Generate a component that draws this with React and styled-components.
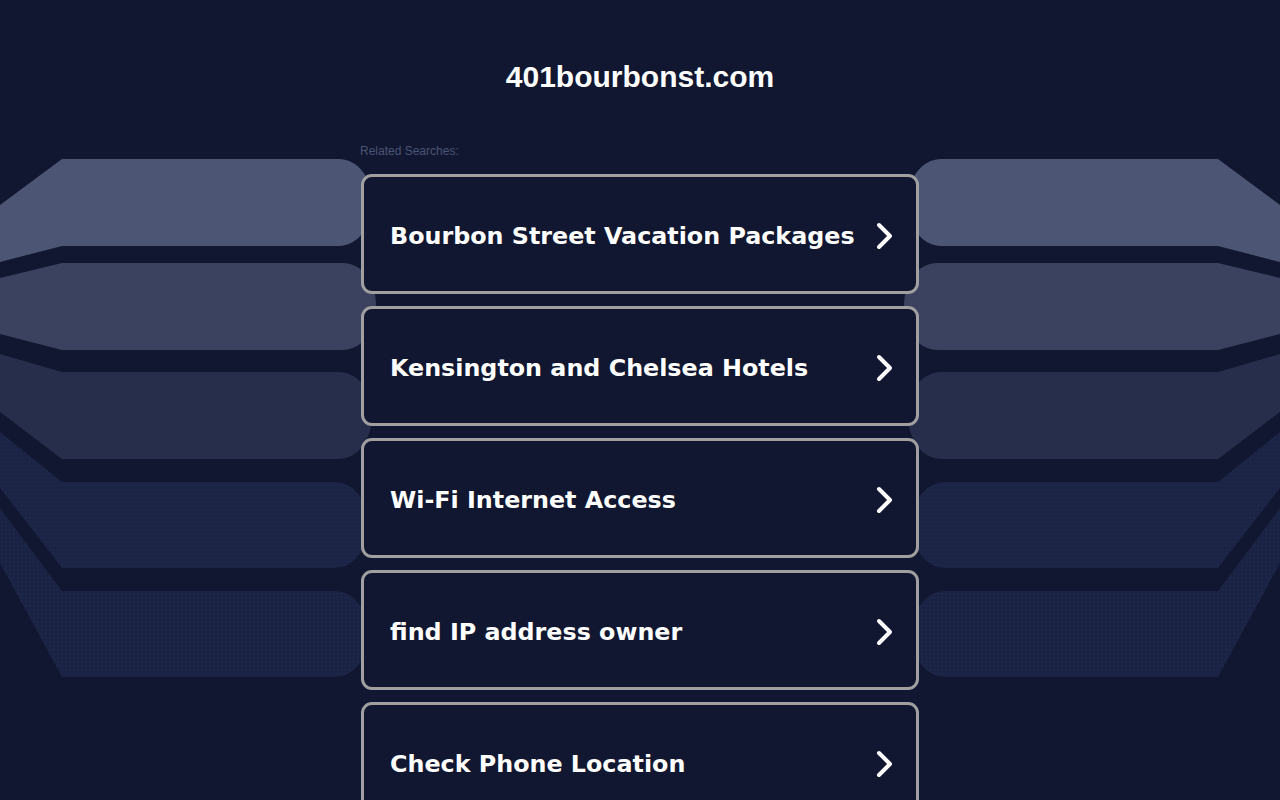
import styled, { createGlobalStyle } from "styled-components";

const GlobalStyle = createGlobalStyle`
  html, body {
    margin: 0;
    padding: 0;
    background: #111730;
  }
  body {
    font-family: "Liberation Sans", Arial, sans-serif;
    overflow: hidden;
  }
`;

const Page = styled.div`
  position: relative;
  min-height: 800px;
  overflow: hidden;
`;

const Backdrop = styled.svg`
  position: absolute;
  top: 0;
  left: 50%;
  margin-left: -640px;
  width: 1280px;
  height: 800px;
  z-index: 0;
`;

const Content = styled.main`
  position: relative;
  z-index: 1;
  width: 558px;
  margin: 0 auto;
  display: flex;
  flex-direction: column;
`;

const Title = styled.h1`
  margin: 0;
  padding-top: 57px;
  height: 40px;
  line-height: 40px;
  text-align: center;
  color: #ffffff;
  font-family: "Liberation Sans", Arial, sans-serif;
  font-weight: bold;
  font-size: 30px;
`;

const Related = styled.div`
  margin-top: 47px;
  margin-left: -1px;
  font-size: 12px;
  line-height: 14px;
  color: #4b5474;
`;

const List = styled.div`
  margin-top: 16px;
  display: flex;
  flex-direction: column;
  gap: 12px;
`;

const Card = styled.a`
  box-sizing: border-box;
  height: 120px;
  display: flex;
  align-items: center;
  justify-content: space-between;
  padding: 4px 22px 0 26px;
  border: 3px solid #a0a0a0;
  border-radius: 11px;
  background: #111730;
  color: #ffffff;
  text-decoration: none;
  font-family: "DejaVu Sans", Verdana, sans-serif;
  font-weight: bold;
  font-size: 23.8px;
  cursor: pointer;
`;

const Label = styled.span`
  white-space: nowrap;
`;

const Chevron = () => (
  <svg width="20" height="28" viewBox="0 0 20 28">
    <polyline
      points="5,3 16,14 5,25"
      fill="none"
      stroke="#ffffff"
      strokeWidth="4"
      strokeLinecap="round"
      strokeLinejoin="round"
    />
  </svg>
);

const bands = [
  { d: "M0,205 L62,159 L338,159 C360,159 372,180 372,202 C372,224 360,246 338,246 L62,246 L0,262 Z", fill: "#4c5573" },
  { d: "M0,278 L62,263 L342,263 C364,263 376,284 376,306 C376,328 364,350 342,350 L62,350 L0,334 Z", fill: "#3a4260" },
  { d: "M0,354 L62,372 L338,372 C360,372 372,393 372,415 C372,437 360,459 338,459 L62,459 L0,412 Z", fill: "#262e4c" },
  { d: "M0,432 L62,482 L334,482 C356,482 368,503 368,525 C368,547 356,568 334,568 L62,568 L0,488 Z", fill: "#1c2445", dots: true },
  { d: "M0,508 L62,591 L334,591 C356,591 368,612 368,634 C368,656 356,677 334,677 L62,677 L0,563 Z", fill: "#1b2344", dots: true },
];

const BandSet = () => (
  <>
    {bands.map((b, i) => (
      <g key={i}>
        <path d={b.d} fill={b.fill} />
        {b.dots && <path d={b.d} fill="url(#dots)" />}
      </g>
    ))}
  </>
);

const searches = [
  "Bourbon Street Vacation Packages",
  "Kensington and Chelsea Hotels",
  "Wi-Fi Internet Access",
  "find IP address owner",
  "Check Phone Location",
];

export default function App() {
  return (
    <Page>
      <GlobalStyle />
      <Backdrop viewBox="0 0 1280 800">
        <defs>
          <pattern id="dots" width="4" height="4" patternUnits="userSpaceOnUse">
            <rect x="1" y="1" width="1" height="1" fill="#252e58" />
          </pattern>
        </defs>
        <BandSet />
        <g transform="translate(1280,0) scale(-1,1)">
          <BandSet />
        </g>
      </Backdrop>
      <Content>
        <Title>401bourbonst.com</Title>
        <Related>Related Searches:</Related>
        <List>
          {searches.map((s) => (
            <Card key={s}>
              <Label>{s}</Label>
              <Chevron />
            </Card>
          ))}
        </List>
      </Content>
    </Page>
  );
}
